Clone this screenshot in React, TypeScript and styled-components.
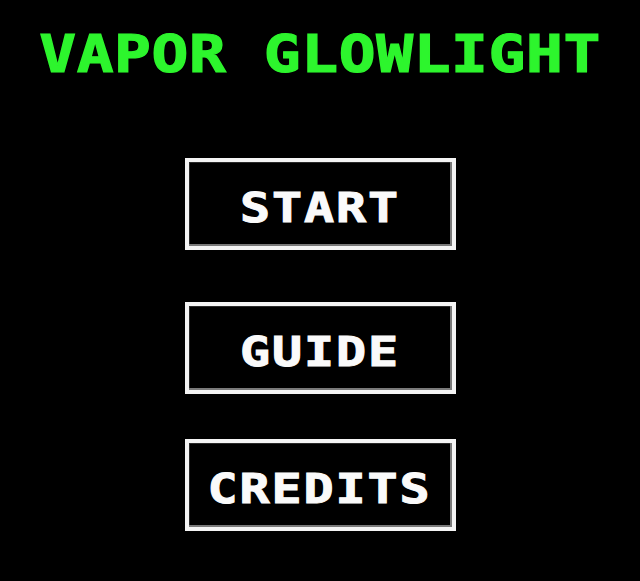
import React from 'react';
import styled, { createGlobalStyle } from 'styled-components';

const GlobalStyle = createGlobalStyle`
  html, body {
    margin: 0;
    padding: 0;
    background: #000;
  }
  #root {
    min-height: 100vh;
  }
`;

const Screen = styled.main`
  min-height: 581px;
  background: #000;
  display: flex;
  flex-direction: column;
  align-items: center;
  font-family: "DejaVu Sans Mono", "Liberation Mono", monospace;
  font-weight: bold;
`;

const Title = styled.h1`
  margin: 24px 0 0;
  font-size: 51px;
  line-height: 1.2;
  font-weight: bold;
  color: #2df52d;
  white-space: pre;
  letter-spacing: 0.5px;
  -webkit-text-stroke: 1.2px #2df52d;
  transform: scaleX(1.2);
`;

const Menu = styled.nav`
  margin-top: 73px;
  display: flex;
  flex-direction: column;
`;

const MenuButton = styled.button<{ $space: number }>`
  width: 271px;
  height: 92px;
  margin-top: ${(p) => p.$space}px;
  box-sizing: border-box;
  background: #000;
  border: 4px solid #f4f4f4;
  box-shadow: inset -2px -2px 0 #7a7a7a, inset 1px 1px 0 #2a2a2a;
  display: flex;
  align-items: center;
  justify-content: center;
  cursor: pointer;
  padding: 0;
  font-family: inherit;
`;

const Label = styled.span`
  display: inline-block;
  font-size: 40px;
  line-height: 1;
  font-weight: bold;
  color: #fafafa;
  letter-spacing: 1.5px;
  -webkit-text-stroke: 1px #fafafa;
  transform: scaleX(1.25) translateY(4px);
`;

const items = [
  { label: 'START', space: 0 },
  { label: 'GUIDE', space: 52 },
  { label: 'CREDITS', space: 45 },
];

export default function App() {
  return (
    <>
      <GlobalStyle />
      <Screen>
        <Title>VAPOR GLOWLIGHT</Title>
        <Menu>
          {items.map((item) => (
            <MenuButton key={item.label} $space={item.space}>
              <Label>{item.label}</Label>
            </MenuButton>
          ))}
        </Menu>
      </Screen>
    </>
  );
}
